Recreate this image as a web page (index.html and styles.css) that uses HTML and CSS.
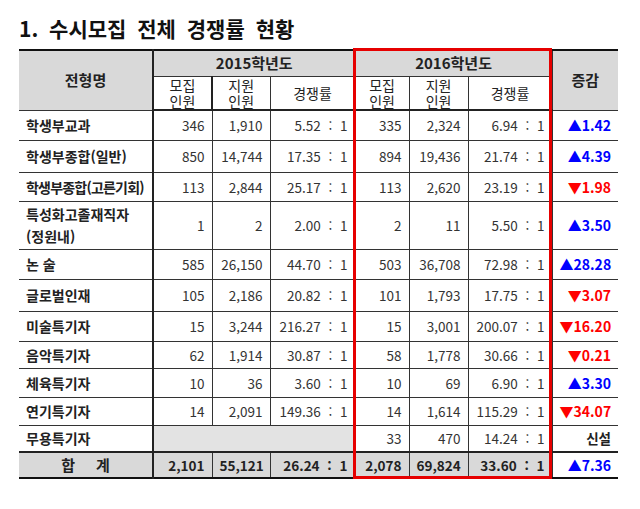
FILE: index.html
```html
<!DOCTYPE html>
<html lang="ko">
<head>
<meta charset="utf-8">
<link rel="stylesheet" href="styles.css">
</head>
<body>
<h1 class="title">1. 수시모집 전체 경쟁률 현황</h1>
<div class="wrap">
<table class="tbl">
<colgroup>
<col class="c1"><col class="c2"><col class="c3"><col class="c4"><col class="c5"><col class="c6"><col class="c7"><col class="c8">
</colgroup>
<thead>
<tr class="h1">
<th rowspan="2" class="gray name-h">전형명</th>
<th colspan="3" class="gray">2015학년도</th>
<th colspan="3" class="gray">2016학년도</th>
<th rowspan="2" class="gray">증감</th>
</tr>
<tr class="h2">
<th class="sub"><span class="ln">모집</span><span class="ln">인원</span></th>
<th class="sub"><span class="ln">지원</span><span class="ln">인원</span></th>
<th class="sub">경쟁률</th>
<th class="sub"><span class="ln">모집</span><span class="ln">인원</span></th>
<th class="sub"><span class="ln">지원</span><span class="ln">인원</span></th>
<th class="sub">경쟁률</th>
</tr>
</thead>
<tbody>
<tr class="r30"><td class="nm">학생부교과</td><td>346</td><td>1,910</td><td class="rt">5.52 : 1</td><td>335</td><td>2,324</td><td class="rt">6.94 : 1</td><td class="up">▲1.42</td></tr>
<tr class="r32"><td class="nm">학생부종합(일반)</td><td>850</td><td>14,744</td><td class="rt">17.35 : 1</td><td>894</td><td>19,436</td><td class="rt">21.74 : 1</td><td class="up">▲4.39</td></tr>
<tr class="r29"><td class="nm tight">학생부종합(고른기회)</td><td>113</td><td>2,844</td><td class="rt">25.17 : 1</td><td>113</td><td>2,620</td><td class="rt">23.19 : 1</td><td class="down">▼1.98</td></tr>
<tr class="r48"><td class="nm two">특성화고졸재직자<br>(정원내)</td><td>1</td><td>2</td><td class="rt">2.00 : 1</td><td>2</td><td>11</td><td class="rt">5.50 : 1</td><td class="up">▲3.50</td></tr>
<tr class="r30"><td class="nm">논 술</td><td>585</td><td>26,150</td><td class="rt">44.70 : 1</td><td>503</td><td>36,708</td><td class="rt">72.98 : 1</td><td class="up">▲28.28</td></tr>
<tr class="r32"><td class="nm">글로벌인재</td><td>105</td><td>2,186</td><td class="rt">20.82 : 1</td><td>101</td><td>1,793</td><td class="rt">17.75 : 1</td><td class="down">▼3.07</td></tr>
<tr class="r30"><td class="nm">미술특기자</td><td>15</td><td>3,244</td><td class="rt">216.27 : 1</td><td>15</td><td>3,001</td><td class="rt">200.07 : 1</td><td class="down">▼16.20</td></tr>
<tr class="r27"><td class="nm">음악특기자</td><td>62</td><td>1,914</td><td class="rt">30.87 : 1</td><td>58</td><td>1,778</td><td class="rt">30.66 : 1</td><td class="down">▼0.21</td></tr>
<tr class="r29"><td class="nm">체육특기자</td><td>10</td><td>36</td><td class="rt">3.60 : 1</td><td>10</td><td>69</td><td class="rt">6.90 : 1</td><td class="up">▲3.30</td></tr>
<tr class="r28"><td class="nm">연기특기자</td><td>14</td><td>2,091</td><td class="rt">149.36 : 1</td><td>14</td><td>1,614</td><td class="rt">115.29 : 1</td><td class="down">▼34.07</td></tr>
<tr class="r27"><td class="nm">무용특기자</td><td colspan="3" class="blank"></td><td>33</td><td>470</td><td class="rt">14.24 : 1</td><td class="new">신설</td></tr>
<tr class="r26 total"><td class="sum">합&nbsp;&nbsp;&nbsp;&nbsp;&nbsp;계</td><td>2,101</td><td>55,121</td><td class="rt">26.24 : 1</td><td>2,078</td><td>69,824</td><td class="rt">33.60 : 1</td><td class="up">▲7.36</td></tr>
</tbody>
</table>
<div class="redbox"></div>
</div>
</body>
</html>
```
FILE: styles.css
```css
html, body {
  margin: 0;
  padding: 0;
  background: #fff;
}
body {
  font-family: "Noto Sans CJK KR", "Noto Sans", sans-serif;
  color: #222;
}
.title {
  margin: 0;
  padding: 16px 0 0 19px;
  height: 35px;
  box-sizing: border-box;
  font-size: 21px;
  font-weight: bold;
  line-height: 24px;
  word-spacing: 5px;
  color: #111;
}
.wrap {
  position: relative;
  margin: 14px 0 0 19px;
  width: 599px;
}
.tbl {
  border-collapse: collapse;
  table-layout: fixed;
  width: 599px;
  font-size: 13.5px;
  border-top: 2px solid #111;
  border-bottom: 2px solid #111;
}
.c1 { width: 134px; }
.c2 { width: 59px; }
.c3 { width: 58px; }
.c4 { width: 85px; }
.c5 { width: 54px; }
.c6 { width: 59px; }
.c7 { width: 84px; }
.c8 { width: 66px; }
.tbl th, .tbl td {
  border: 1px solid #333;
  padding: 0 7px;
  line-height: 16px;
}
.tbl tr > :first-child {
  border-left: none;
  border-right: 2px solid #222;
}
.tbl tr > :last-child {
  border-right: none;
}
.tbl th {
  font-weight: bold;
  text-align: center;
  color: #222;
}
.tbl th.gray {
  background: #d9d9d9;
  font-size: 15px;
}
.tbl th.name-h {
  vertical-align: middle;
}
.h1 { height: 26px; }
.h2 { height: 34px; }
.h2 th {
  border-bottom: 2px solid #222;
}
.tbl th.sub {
  background: #fff;
  font-weight: normal;
  font-size: 14px;
  line-height: 16px;
  padding-top: 0;
  padding-bottom: 0;
}
.ln {
  display: block;
  height: 16px;
  line-height: 16px;
}
.tbl td {
  text-align: right;
  color: #333;
}
.tbl td.rt {
  word-spacing: 4px;
}
.tbl td.nm {
  text-align: left;
  font-weight: bold;
  color: #222;
  font-size: 14px;
}
.tbl td.tight {
  letter-spacing: -0.8px;
  padding-right: 0;
}
.tbl td.two {
  line-height: 22px;
}
.r26 { height: 26px; }
.r27 { height: 27px; }
.r28 { height: 28px; }
.r29 { height: 29px; }
.r30 { height: 30px; }
.r32 { height: 32px; }
.r48 { height: 48px; }
.tbl td.up {
  color: #0000ff;
  font-weight: bold;
  font-size: 14px;
}
.tbl td.down {
  color: #ff0000;
  font-weight: bold;
  font-size: 14px;
}
.tbl td.new {
  font-weight: bold;
  color: #222;
}
.tbl td.blank {
  background: #e3e3e3;
}
.tbl .total td {
  background: #d9d9d9;
  font-weight: bold;
  color: #222;
  border-top: 2px solid #222;
}
.tbl .total td.up {
  background: #fff;
  color: #0000ff;
}
.tbl td.sum {
  text-align: center;
  font-weight: bold;
  font-size: 15px;
}
.redbox {
  position: absolute;
  left: 334px;
  top: -1px;
  width: 199px;
  height: 431px;
  border: 3px solid #e60000;
  box-sizing: border-box;
  pointer-events: none;
}
```
